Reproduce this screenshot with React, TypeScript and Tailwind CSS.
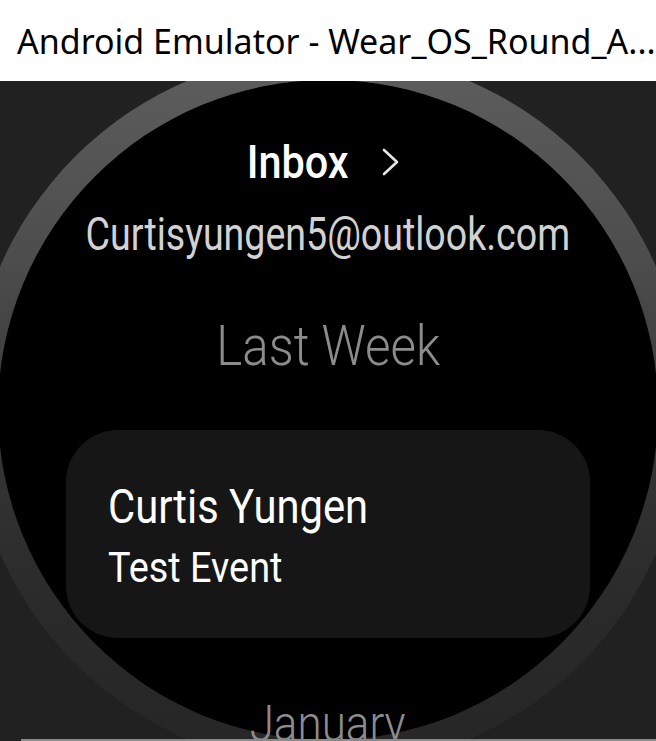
import React from "react";

const roboto = { fontFamily: "Roboto, 'Noto Sans', sans-serif" };

function Chevron() {
  return (
    <svg width="20" height="28" viewBox="0 0 20 28" className="block">
      <path d="M3 2 L16 14 L3 26" fill="none" stroke="#e6e6e6" strokeWidth="2.6" strokeLinecap="round" strokeLinejoin="round" />
    </svg>
  );
}

export default function App() {
  return (
    <div className="w-[656px] h-[741px] overflow-hidden flex flex-col bg-[#212121]">
      <div className="h-[81px] shrink-0 bg-white flex items-center pl-[17px]">
        <span className="text-[34px] leading-none text-black whitespace-nowrap" style={{ fontFamily: "'Noto Sans', 'Open Sans', sans-serif" }}>
          Android Emulator - Wear_OS_Round_A...
        </span>
      </div>
      <div className="relative flex-1 overflow-hidden bg-[#212121]">
        <div className="absolute left-[-30px] top-[-29px] w-[716px] h-[716px] rounded-full bg-[linear-gradient(to_bottom,#5e5e5e_0%,#4c4c4c_30%,#333333_58%,#2a2a2a_78%,#262626_100%)]" />
        <div className="absolute left-[-2px] top-[-1px] w-[660px] h-[660px] rounded-full bg-black" />
        <div className="relative flex flex-col items-center" style={roboto}>
          <div className="mt-[58px] mr-[14px] h-[46px] flex items-center gap-[26px]">
            <span className="text-[46px] leading-[46px] font-medium text-white scale-x-[0.9]">Inbox</span>
            <Chevron />
          </div>
          <div className="mt-[26px] h-[46px] text-[46px] leading-[46px] text-[#d2d2d2] whitespace-nowrap scale-x-[0.816]">
            Curtisyungen5@outlook.com
          </div>
          <div className="mt-[61px] h-[56px] text-[56px] leading-[56px] font-light text-[#8c8c8c] whitespace-nowrap scale-x-[0.88]">
            Last Week
          </div>
          <div className="mt-[56px] w-[524px] h-[208px] rounded-[52px] bg-[#161616] pl-[42px] pt-[53px] flex flex-col">
            <span className="text-[48px] leading-[48px] text-white whitespace-nowrap origin-left scale-x-[0.87]">Curtis Yungen</span>
            <span className="mt-[16px] text-[42px] leading-[42px] text-white whitespace-nowrap origin-left scale-x-[0.9]">Test Event</span>
          </div>
          <div className="mt-[61px] h-[50px] text-[50px] leading-[50px] font-light text-[#8c8c8c] whitespace-nowrap scale-x-[0.88]">
            January
          </div>
        </div>
      </div>
      <div className="h-[2px] shrink-0 flex">
        <div className="w-[21px] bg-[#212121]" />
        <div className="flex-1 bg-[#8a8a8a]" />
      </div>
    </div>
  );
}
